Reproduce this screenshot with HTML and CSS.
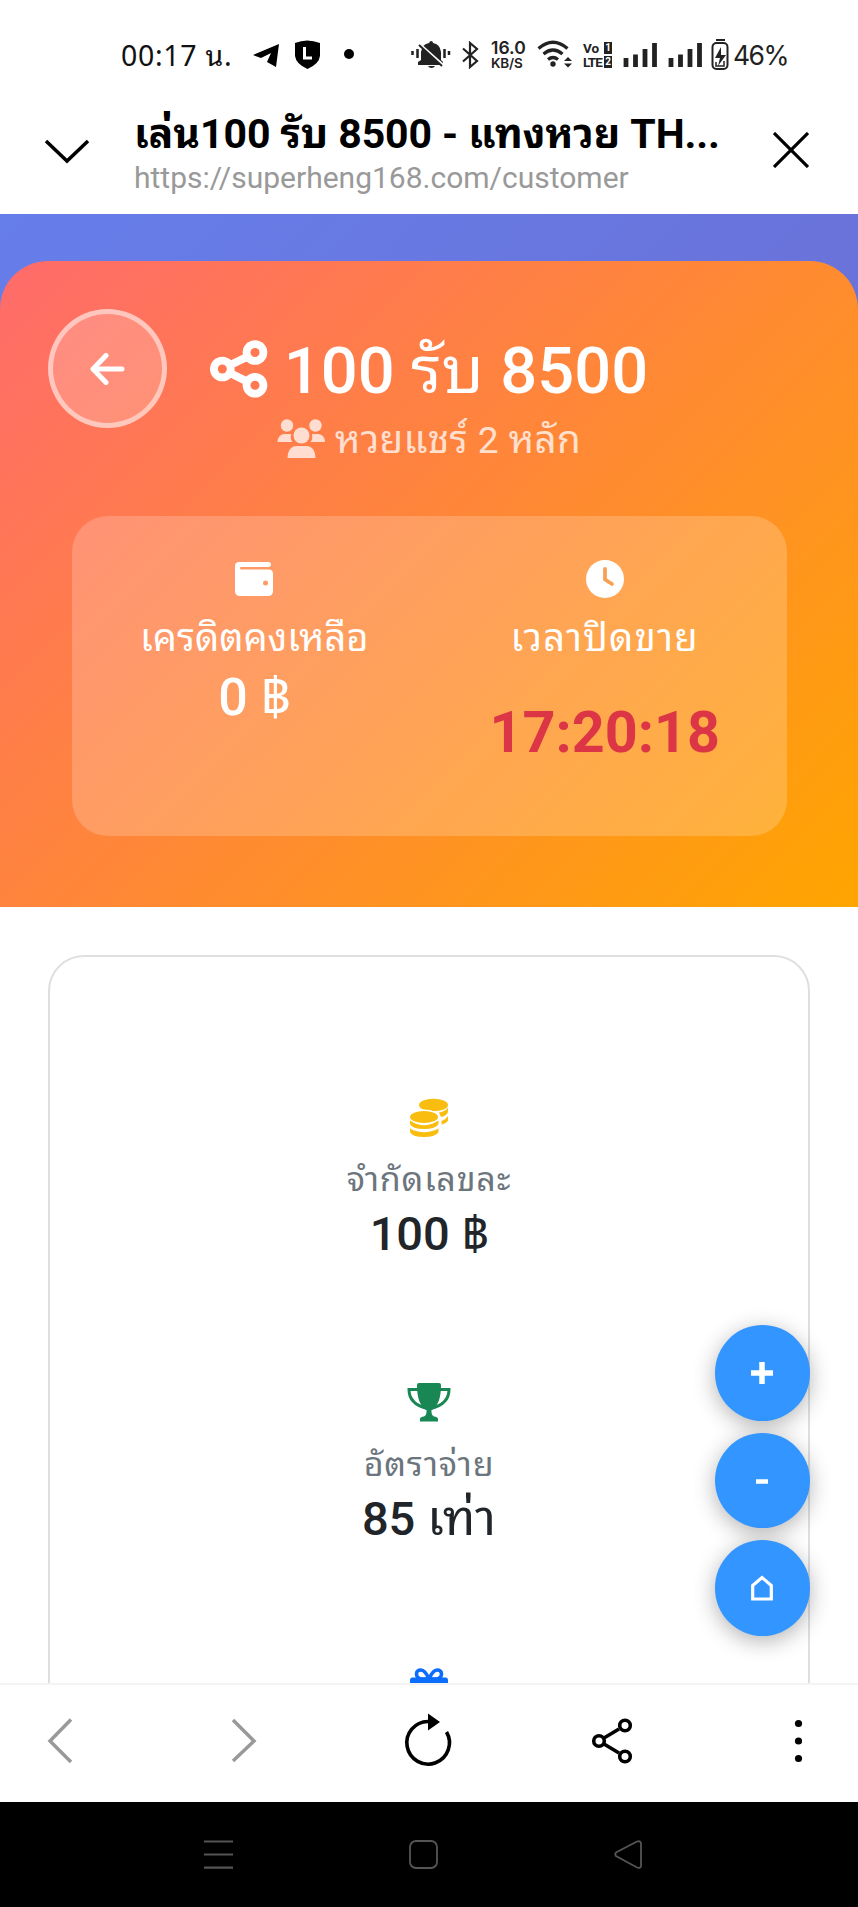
FILE: index.html
```html
<!DOCTYPE html>
<html lang="th">
<head>
<meta charset="utf-8">
<title>เล่น100 รับ 8500</title>
<link rel="stylesheet" href="styles.css">
</head>
<body>
<div class="screen">
  <div class="status">
    <span class="clock">00:17 น.</span>
    <svg class="i-tg" width="27" height="24" viewBox="253 43 27 24"><path d="M253 55 279 44 276 67 267 62 271 53 261 58Z" fill="#000"/></svg>
    <svg class="i-shield" width="26" height="30" viewBox="294 40 26 30"><path d="M295 43Q307 38 320 43V56Q319 64 307.500 69Q296 64 295 56Z" fill="#000"/><path d="M304.500 47V58H312" fill="none" stroke="#fff" stroke-width="3"/></svg>
    <svg class="i-dot" width="10" height="10" viewBox="0 0 10 10"><circle cx="5" cy="5" r="5"/></svg>
    <svg class="i-bell" width="40" height="32" viewBox="411 38 40 32"><path d="M418 65V62L421 60V52Q422 44 429 43Q430 41 431 41Q433 41 433 43Q440 44 441 52V60L443 62V65ZM428 66H435Q434 68 431.500 68T428 66" fill="#222"/><path d="M417 42 444 66" stroke="#fff" stroke-width="3"/><path d="M419 45 442 66" stroke="#222" stroke-width="2"/><path d="M412.500 51V55M417.500 49V58M444.500 49V58M449 51V55" stroke="#222" stroke-width="2.500"/></svg>
    <svg class="i-bt" width="17" height="28" viewBox="462 41 17 28"><path d="M463 48.500 477 61 470 67V43L477 49 463 61.500" fill="none" stroke="#222" stroke-width="2.200"/></svg>
    <span class="rate"><b>16.0</b><b>KB/S</b></span>
    <svg class="i-wifi" width="36" height="30" viewBox="537 39 36 30"><g fill="none" stroke="#222" stroke-width="3.200"><path d="M538.500 48.500Q553 36 567.500 48.500M543.500 54Q553 46 562.500 54M548 59.500Q553 55.500 558 59.500"/></g><circle cx="553" cy="64" r="2.700" fill="#222"/><path d="M564 61 568 57 572 61ZM564 63.500H572L568 67.500Z" fill="#222"/></svg>
    <span class="volte"><span>Vo<i>1</i></span><span>LTE<i>2</i></span></span>
    <svg class="i-sig" width="35" height="25" viewBox="0 0 35 25"><path d="M3 16V25M12.500 12.500V25M22 7V25M31.500 1V25" stroke="#222" stroke-width="4.800"/></svg>
    <svg class="i-sig2" width="35" height="25" viewBox="0 0 35 25"><path d="M3 16V25M12.500 12.500V25M22 7V25M31.500 1V25" stroke="#222" stroke-width="4.800"/></svg>
    <svg class="i-bat" width="18" height="32" viewBox="711 38 18 32"><path d="M716 40H725" stroke="#222" stroke-width="2"/><rect x="712.500" y="43" width="15" height="26" rx="4" fill="none" stroke="#222" stroke-width="2"/><path d="M721 47 715 58H720L718 66 726 55H721Z" fill="#222"/><path d="M716 62V66H724V61" fill="none" stroke="#222" stroke-width="1.500"/></svg>
    <span class="pct">46%</span>
  </div>
  <header class="bar">
    <svg class="chev" width="46" height="26" viewBox="0 0 46 26"><path d="M2 2 23 22 44 2" fill="none" stroke="#000" stroke-width="3.500"/></svg>
    <div class="heads">
      <div class="title">เล่น100 รับ 8500 - แทงหวย TH...</div>
      <div class="url">https://superheng168.com/customer</div>
    </div>
    <svg class="close" width="36" height="36" viewBox="0 0 36 36"><path d="M1 1 35 35M35 1 1 35" stroke="#000" stroke-width="3.200"/></svg>
  </header>
  <main class="page">
    <section class="hero">
      <div class="top">
        <button class="back"><svg width="36" height="32" viewBox="0 0 36 32"><path d="M17 2.500 4 16 17 29.500M4 16H33" fill="none" stroke="#fff" stroke-width="5" stroke-linecap="round" stroke-linejoin="round"/></svg></button>
        <div class="names">
          <h1><svg width="58" height="58" viewBox="209 340 58 58"><path d="M254 353 221 369 254 385.500" fill="none" stroke="#fff" stroke-width="8"/><g fill="#fff"><circle cx="254" cy="352.500" r="12.300"/><circle cx="221.300" cy="369" r="12.300"/><circle cx="254" cy="385.300" r="12.300"/></g><g fill="#ff7852"><circle cx="254" cy="352.500" r="4.500"/><circle cx="221.300" cy="369" r="4.500"/><circle cx="254" cy="385.300" r="4.500"/></g></svg><span>100 <span class="light">รับ</span> 8500</span></h1>
          <p class="sub"><svg width="49" height="40" viewBox="277 419 49 40"><g fill="#fff"><circle cx="287" cy="425.500" r="6.200"/><circle cx="315.500" cy="425.500" r="6.200"/><circle cx="301.500" cy="435.500" r="8"/><path d="M277.500 442Q278 434 285 434H291Q290 439 292.500 442ZM325 442Q324.500 434 317.500 434H312Q313 439 310.500 442ZM287.500 458Q288 446 297 446H306Q315 446 315.500 458Z"/></g></svg><span>หวยแชร์ <span class="num">2</span> หลัก</span></p>
        </div>
      </div>
      <div class="glass">
        <div class="col">
          <svg width="40" height="38" viewBox="0 0 40 38"><path fill="#fff" fill-rule="evenodd" d="M5 2H34Q37 2 37 4.500T34 7H7Q6 7 6 8T7 9.500H35Q39 9.500 39 14V31Q39 36 34 36H6Q1 36 1 31V6Q1 2 5 2ZM31.500 20.500A2.500 2.500 0 1 0 31.500 25.500A2.500 2.500 0 1 0 31.500 20.500Z"/></svg>
          <span class="lab">เครดิตคงเหลือ</span>
          <span class="val">0 <span class="baht">฿</span></span>
        </div>
        <div class="col">
          <svg width="38" height="38" viewBox="0 0 38 38"><circle cx="19" cy="19" r="19" fill="#fff"/><path d="M19 9V19.500L26 24" fill="none" stroke="#f8a055" stroke-width="3.800" stroke-linecap="round" stroke-linejoin="round"/></svg>
          <span class="lab wide">เวลาปิดขาย</span>
          <span class="time">17:20:18</span>
        </div>
      </div>
    </section>
    <section class="body">
      <div class="card">
        <div class="item">
          <svg width="40" height="40" viewBox="409 1098 40 40"><g fill="#f9bd10"><ellipse cx="433.500" cy="1105" rx="14.500" ry="6.200"/><path d="M439 1112.500Q446 1111 448 1107.500V1112Q447 1115.500 441 1117ZM441.500 1121Q446 1119.500 448 1116V1120.500Q447 1123 441.500 1124.500Z"/><ellipse cx="424" cy="1117" rx="15.500" ry="7.500" fill="#fff"/><ellipse cx="424" cy="1117" rx="14" ry="6"/><path d="M410 1120.500Q424 1130 438.500 1120.500V1124Q436 1129 424 1129T410 1124ZM410 1128.500Q424 1136 438.500 1128.500V1132Q436 1137 424 1137T410 1132Z"/></g></svg>
          <span class="ilab">จำกัดเลขละ</span>
          <span class="ival">100 <span class="baht">฿</span></span>
        </div>
        <div class="item">
          <svg width="44" height="40" viewBox="0 0 44 40"><g fill="none" stroke="#198754" stroke-width="3"><path d="M12 6.500H2Q2 21 20 25.500M32 6.500H42Q42 21 24 25.500"/></g><path d="M12 0H32Q34 0 34 2Q34 22 24.500 27Q24 32 27 33.500Q31 34 31 36V38.500H13V36Q13 34 17 33.500Q20 32 19.500 27Q10 22 10 2Q10 0 12 0Z" fill="#198754"/></svg>
          <span class="ilab">อัตราจ่าย</span>
          <span class="ival">85 <span class="light big">เท่า</span></span>
        </div>
        <div class="item">
          <svg width="38" height="40" viewBox="0 0 38 40"><g fill="none" stroke="#0d6efd" stroke-width="3.600"><path d="M19 11H11Q6.500 10 6.500 6T11 2Q15 2 19 11ZM19 11H27Q31.500 10 31.500 6T27 2Q23 2 19 11Z"/></g><path d="M2 9.500H36Q38 9.500 38 12V19H0V12Q0 9.500 2 9.500ZM2 22H36V36H2Z" fill="#0d6efd"/></svg>
        </div>
      </div>
    </section>
    <div class="fabs">
      <button class="fab"><svg width="22" height="22" viewBox="0 0 22 22"><path d="M11 0V22M0 11H22" stroke="#fff" stroke-width="5.500"/></svg></button>
      <button class="fab"><svg width="22" height="22" viewBox="0 0 22 22"><path d="M5 12.500H17" stroke="#fff" stroke-width="4.500"/></svg></button>
      <button class="fab"><svg width="22" height="26" viewBox="0 0 22 26"><path d="M1.700 24V10.500L11 2.500 20.300 10.500V24Z" fill="none" stroke="#fff" stroke-width="3.200"/></svg></button>
    </div>
  </main>
  <nav class="tools">
    <svg width="858" height="117" viewBox="0 1685 858 117"><g fill="none" stroke="#999" stroke-width="3.500"><path d="M71 1719.500 50 1741 71 1762M233 1720 254 1741 233 1761"/></g><path d="M428 1721.500A21.300 21.300 0 1 0 446.500 1732" fill="none" stroke="#000" stroke-width="3.600"/><path d="M428 1713.500 440 1722 428 1730.500Z"/><g fill="none" stroke="#000" stroke-width="3.600"><path d="M604 1738 619 1729M604 1744 619 1753"/><circle cx="599" cy="1741" r="5.300"/><circle cx="625" cy="1725.500" r="5.300"/><circle cx="625" cy="1756.500" r="5.300"/></g><circle cx="798.500" cy="1723.500" r="3.600"/><circle cx="798.500" cy="1741" r="3.600"/><circle cx="798.500" cy="1758.500" r="3.600"/></svg>
  </nav>
  <nav class="sys">
    <svg width="858" height="105" viewBox="0 1802 858 105"><g fill="none" stroke="#555" stroke-width="2.200"><path d="M204 1841.500H233M204 1854.500H233M204 1867.700H233"/><rect x="410" y="1841" width="27" height="27" rx="6" stroke-width="1.800"/><path d="M637 1841.500 616 1852.500Q614.500 1854.500 616 1856L637 1867.500Q641 1868.500 641 1866V1843Q640 1840.500 637 1841.500Z" stroke-width="1.800"/></g></svg>
  </nav>
</div>
</body>
</html>
```
FILE: styles.css
```css
* { box-sizing: border-box; }
body { margin: 0; background: #fff; font-family: Roboto, "Noto Sans Thai Looped", "Noto Looped Thai", "Droid Sans Thai", Sarabun, Loma, Waree, Garuda, "Noto Sans Thai", "Noto Sans", sans-serif; }
svg { display: block; flex: none; }
button { padding: 0; border: 0; display: flex; align-items: center; justify-content: center; }
h1, p { margin: 0; }
span { white-space: nowrap; }
.light, .baht { font-weight: 400; }
.big { font-size: 50px; line-height: 1; }
.screen { width: 858px; height: 1907px; overflow: hidden; display: flex; flex-direction: column; }

.status { height: 100px; padding-top: 39px; padding-left: 121px; display: flex; align-items: flex-start; color: #111; }
.clock { width: 132px; font: 400 28.5px/32px "Noto Sans", "Noto Sans Thai Looped", Loma, Waree, "Noto Sans Thai", sans-serif; letter-spacing: .7px; }
.i-tg { margin-top: 4px; }
.i-shield { margin: 1px 0 0 14px; }
.i-dot { margin: 10px 0 0 24px; }
.i-bell { margin: -1px 0 0 57px; }
.i-bt { margin: 2px 0 0 11px; }
.rate { width: 46px; margin: 1px 0 0 12px; display: flex; flex-direction: column; gap: 2px; font: 600 17.5px/15px Inter, sans-serif; color: #222; }
.rate b { font-weight: 600; }
.rate b + b { font-size: 13.5px; line-height: 13px; letter-spacing: -.2px; }
.i-wifi { margin-top: 0; }
.volte { width: 40px; margin: 3px 0 0 10px; display: flex; flex-direction: column; gap: 2px; font: 700 13.5px/12px Roboto, sans-serif; color: #222; }
.volte > span { display: flex; justify-content: space-between; width: 29px; letter-spacing: -1px; }
.volte span:first-child { letter-spacing: 0; }
.volte i { font: 700 10px/12px Roboto, sans-serif; letter-spacing: 0; background: #222; color: #fff; width: 8px; height: 12px; text-align: center; }
.i-sig { margin-top: 3px; }
.i-sig2 { margin: 3px 0 0 10px; }
.i-bat { margin: -1px 0 0 8px; }
.pct { margin: 1px 0 0 4px; font: 400 26.500px/30px Inter, sans-serif; letter-spacing: -1.5px; color: #222; }

.bar { height: 114px; display: flex; padding: 10px 49px 0 44px; }
.chev { margin-top: 29px; }
.heads { flex: 1; padding-left: 44px; }
.title { font-size: 41px; line-height: 48px; font-weight: 700; letter-spacing: -.1px; color: #000; margin-bottom: 2px; white-space: nowrap; }
.url { font-size: 30px; line-height: 36px; color: #999; }
.close { margin-top: 22px; }

.page { position: relative; height: 1469px; overflow: hidden; background: #fff linear-gradient(135deg, #667eea 0%, #764ba2 100%) 0 0 / 858px 3200px no-repeat; padding-top: 47px; }
.hero { height: 646px; padding-top: 48px; border-radius: 48px 48px 0 0; background: linear-gradient(135deg, #ff6b6b 0%, #ffa500 100%); color: #fff; }
.top { display: grid; height: 159px; }
.back { grid-area: 1 / 1; width: 119px; height: 119px; margin-left: 48px; border: 5px solid rgba(255,255,255,.5); border-radius: 50%; background: rgba(255,255,255,.2); }
.back svg { margin-right: 2px; }
.names { grid-area: 1 / 1; justify-self: center; padding-top: 23px; pointer-events: none; }
h1 { display: flex; justify-content: center; align-items: center; gap: 16px; height: 78px; font-size: 65px; line-height: 78px; font-weight: 500; letter-spacing: .1px; }
h1 svg { margin-top: -4px; }
.sub { display: flex; justify-content: center; gap: 9px; height: 54px; padding-top: 4px; font-size: 38.5px; line-height: 52px; letter-spacing: .3px; opacity: .75; }
.num { font-size: 37px; }
.sub svg { margin-top: 5px; }
.glass { margin: 48px 71px 0 72px; height: 320px; border-radius: 36px; background: rgba(255,255,255,.2); padding: 44px 7px 0; display: grid; grid-template-columns: 1fr 1fr; }
.col { display: flex; flex-direction: column; align-items: center; }
.lab { margin-top: 15px; font-size: 38px; line-height: 50px; }
.wide { letter-spacing: 1.3px; }
.val { margin-top: 4px; font-size: 52px; line-height: 62px; font-weight: 500; }
.time { margin-top: 36px; font-size: 57.5px; line-height: 68px; font-weight: 700; color: #dc3545; }

.body { background: #fff; padding: 48px; height: 800px; }
.card { height: 900px; border: 2px solid #dedfe1; border-radius: 36px; padding-top: 141px; }
.item { height: 285px; display: flex; flex-direction: column; align-items: center; }
.ilab { margin-top: 18px; font-size: 34px; line-height: 47px; letter-spacing: .8px; color: #6c757d; }
.ival { margin-top: 1px; height: 60px; font-size: 47px; line-height: 60px; font-weight: 500; color: #212529; }

.fabs { position: absolute; left: 714.5px; top: 1111px; display: flex; flex-direction: column; gap: 12px; }
.fab { width: 95.500px; height: 95.500px; border-radius: 50%; background: #3395ff; box-shadow: 0 5px 22px rgba(0,0,0,.3); }

.tools { height: 119px; background: #fff; border-top: 2px solid #f3f3f3; }
.sys { height: 105px; background: #000; }
```
